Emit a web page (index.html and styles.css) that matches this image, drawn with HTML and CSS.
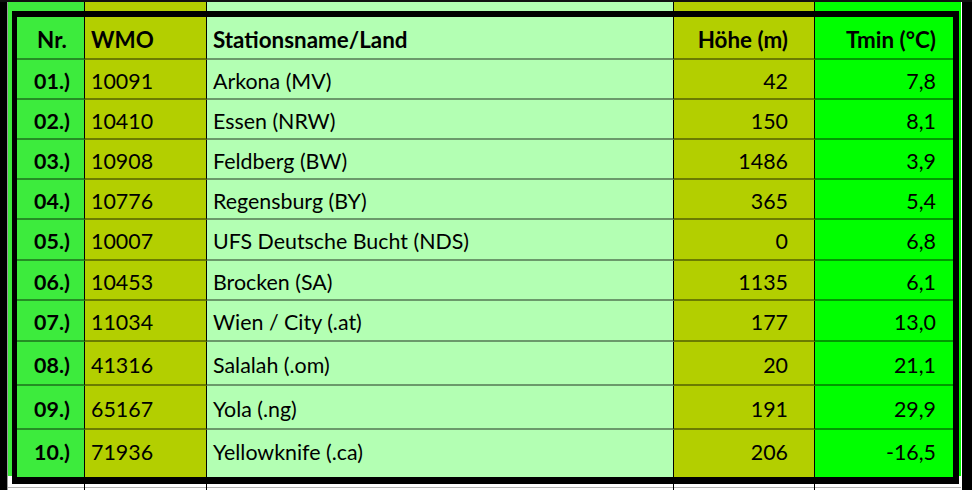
FILE: index.html
```html
<!DOCTYPE html>
<html lang="de">
<head>
<meta charset="utf-8">
<title>Stationen</title>
<link rel="stylesheet" href="styles.css">
</head>
<body>
<div class="sheet">
  <div class="edge-left"></div>
  <div class="main">
    <div class="table">
      <div class="c nr hd">Nr.</div><div class="c wmo hd">WMO</div><div class="c st hd">Stationsname/Land</div><div class="c hoe hd">Höhe (m)</div><div class="c tmin hd">Tmin (°C)</div>

      <div class="c nr">01.)</div><div class="c wmo">10091</div><div class="c st">Arkona (MV)</div><div class="c hoe">42</div><div class="c tmin">7,8</div>
      <div class="c nr">02.)</div><div class="c wmo">10410</div><div class="c st">Essen (NRW)</div><div class="c hoe">150</div><div class="c tmin">8,1</div>
      <div class="c nr">03.)</div><div class="c wmo">10908</div><div class="c st">Feldberg (BW)</div><div class="c hoe">1486</div><div class="c tmin">3,9</div>
      <div class="c nr">04.)</div><div class="c wmo">10776</div><div class="c st">Regensburg (BY)</div><div class="c hoe">365</div><div class="c tmin">5,4</div>
      <div class="c nr">05.)</div><div class="c wmo">10007</div><div class="c st">UFS Deutsche Bucht (NDS)</div><div class="c hoe">0</div><div class="c tmin">6,8</div>
      <div class="c nr">06.)</div><div class="c wmo">10453</div><div class="c st">Brocken (SA)</div><div class="c hoe">1135</div><div class="c tmin">6,1</div>
      <div class="c nr">07.)</div><div class="c wmo">11034</div><div class="c st">Wien / City (.at)</div><div class="c hoe">177</div><div class="c tmin">13,0</div>
      <div class="c nr">08.)</div><div class="c wmo">41316</div><div class="c st">Salalah (.om)</div><div class="c hoe">20</div><div class="c tmin">21,1</div>
      <div class="c nr">09.)</div><div class="c wmo">65167</div><div class="c st">Yola (.ng)</div><div class="c hoe">191</div><div class="c tmin">29,9</div>
      <div class="c nr last">10.)</div><div class="c wmo last">71936</div><div class="c st last">Yellowknife (.ca)</div><div class="c hoe last">206</div><div class="c tmin last">-16,5</div>
    </div>
  </div>
  <div class="edge-gap"></div>
  <div class="edge-right"></div>
</div>
</body>
</html>
```
FILE: styles.css
```css
html, body {
  margin: 0;
  padding: 0;
  background: #fff;
}
body {
  width: 972px;
  height: 490px;
  overflow: hidden;
  font-family: Lato, "Open Sans", "Liberation Sans", sans-serif;
  font-size: 21.4px;
  color: #000;
}
.sheet {
  display: flex;
  width: 972px;
  height: 490px;
  box-sizing: border-box;
  border-top: 2px solid #111;
}
.edge-left {
  width: 7px;
  background: #000;
  border-right: 1px solid #9a9a9a;
  flex: none;
}
.edge-gap {
  width: 1px;
  background: #fff;
  flex: none;
}
.edge-right {
  width: 10px;
  background: #000;
  flex: none;
}
.main {
  width: 953px;
  flex: none;
  background-color: #fff;
  background-image:
    linear-gradient(to right, transparent 76px, #000 76px 77px, transparent 77px 198px, #000 198px 199px, transparent 199px 665px, #000 665px 666px, transparent 666px 806px, #000 806px 807px, transparent 807px),
    linear-gradient(#b4b4b4, #b4b4b4),
    linear-gradient(to right, #3deb3d 0 76px, #b3cf00 76px 198px, #b3ffb3 198px 665px, #b3cf00 665px 806px, #00ff00 806px);
  background-size: 100% 100%, 100% 1px, 100% 474px;
  background-position: 0 0, 0 485px, 0 0;
  background-repeat: no-repeat;
}
.table {
  margin: 9px 2px 0 4px;
  border-style: solid;
  border-color: #000;
  border-width: 6px 6px 7px 5px;
  display: grid;
  grid-template-columns: 68px 122px 467px 141px 138px;
  grid-template-rows: 43px 40px 40px 40px 40px 41px 40px 41px 44px 44px 47px;
}
.c {
  display: flex;
  align-items: center;
  box-sizing: border-box;
  padding-top: 3px;
  border-bottom: 2px solid rgba(0, 0, 0, 0.4);
  border-right: 1px solid #000;
  white-space: nowrap;
}
.c.last {
  border-bottom: none;
  padding-top: 0;
  padding-bottom: 3px;
}
.hd {
  font-weight: 700;
  font-size: 22.4px;
}
.nr {
  background: #3deb3d;
  justify-content: center;
  padding-left: 3px;
  font-weight: 700;
}
.wmo {
  background: #b3cf00;
  padding-left: 6px;
}
.st {
  background: #b3ffb3;
  padding-left: 6px;
}
.hoe {
  background: #b3cf00;
  justify-content: flex-end;
  padding-right: 26px;
}
.tmin {
  background: #00ff00;
  justify-content: flex-end;
  padding-right: 17px;
  border-right: none;
}
```
